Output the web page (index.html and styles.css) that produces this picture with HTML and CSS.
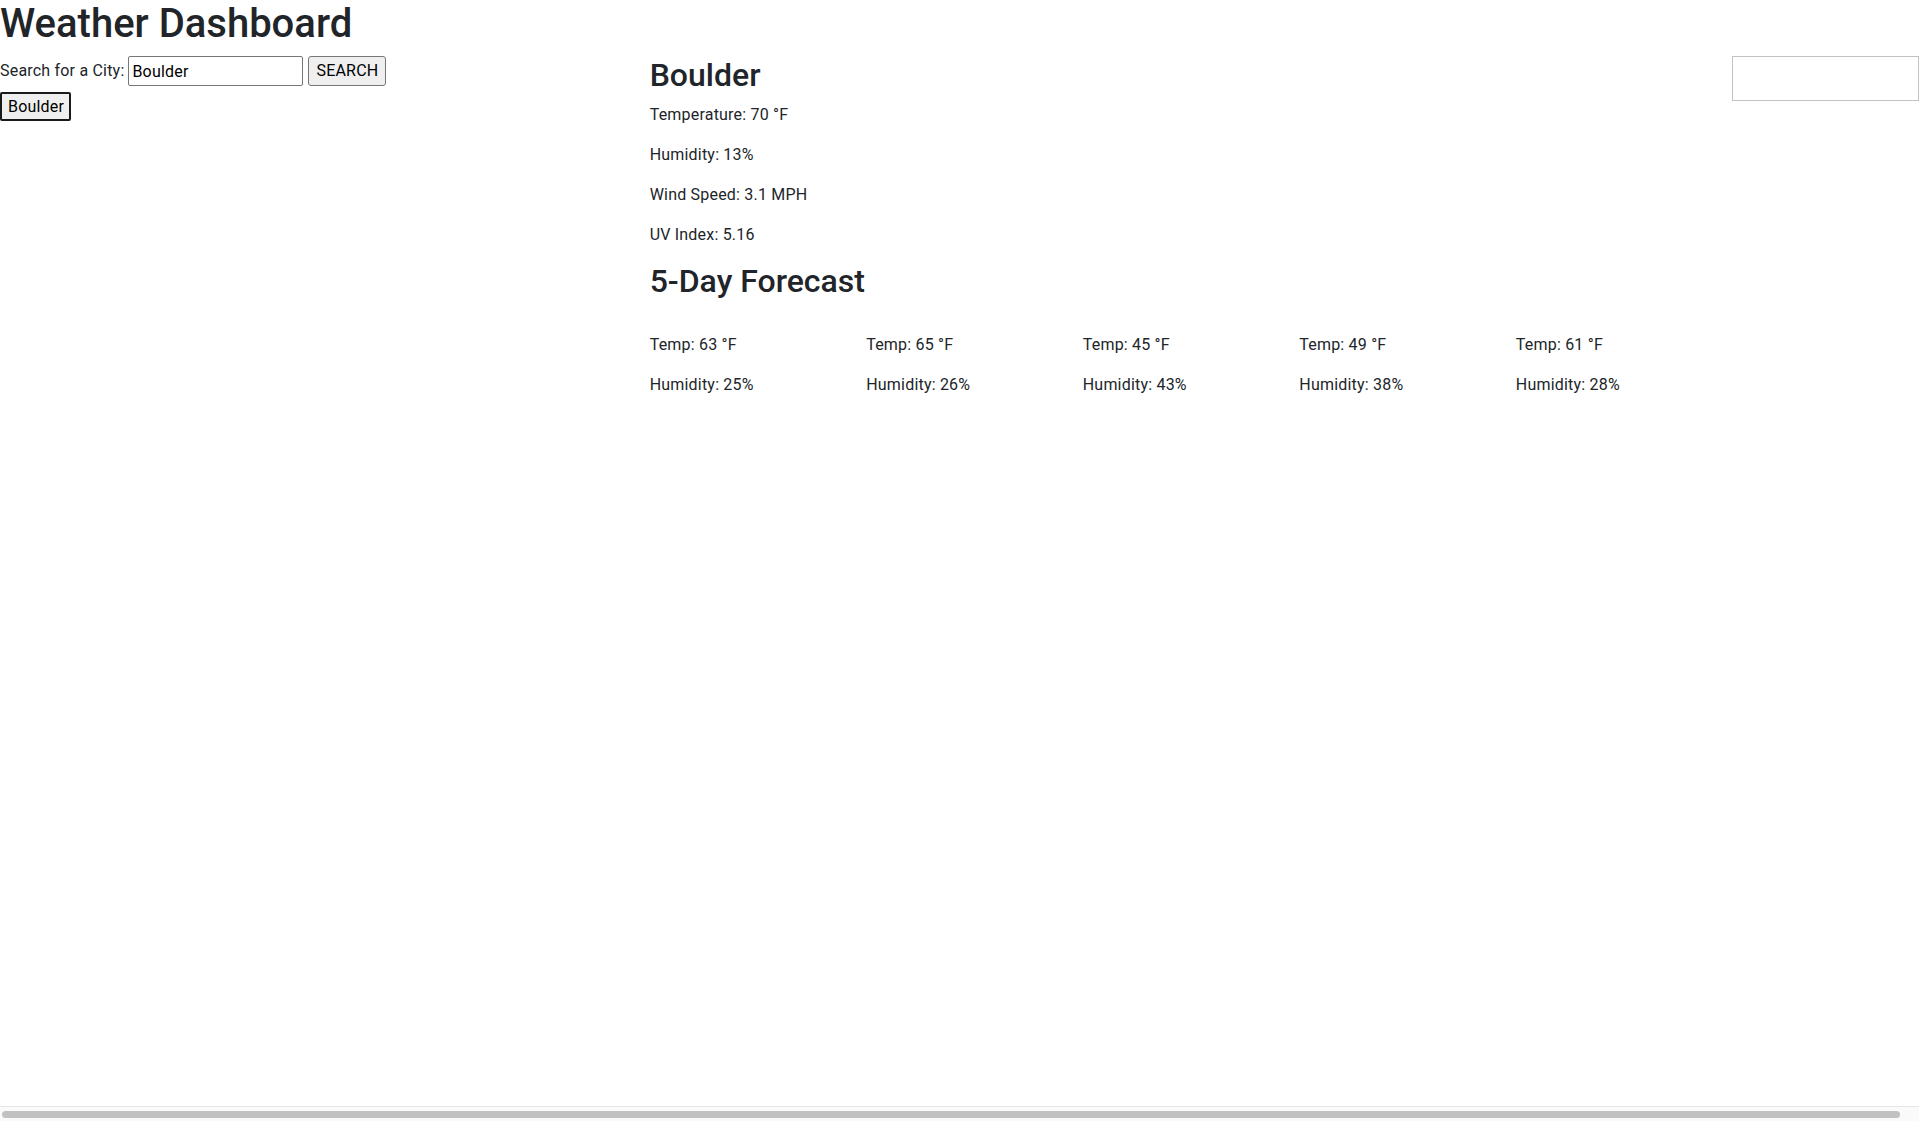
FILE: index.html
```html
<!DOCTYPE html>
<html lang="en">
<head>
<meta charset="utf-8">
<title>Weather Dashboard</title>
<link rel="stylesheet" href="styles.css">
</head>
<body>
<h1 class="title">Weather Dashboard</h1>
<div class="row">
  <div class="col col-4">
    <form class="search">
      <label class="search-label" for="city">Search for a City:</label>
      <input class="search-input" id="city" type="text" value="Boulder">
      <button class="btn search-btn" type="button">SEARCH</button>
    </form>
    <div class="history">
      <button class="btn city-btn" type="button">Boulder</button>
    </div>
  </div>
  <div class="col col-8">
    <div class="row">
      <div class="col col-10">
        <h2 class="heading">Boulder</h2>
        <p class="stat">Temperature: 70 °F</p>
        <p class="stat">Humidity: 13%</p>
        <p class="stat">Wind Speed: 3.1 MPH</p>
        <p class="stat">UV Index: 5.16</p>
      </div>
      <div class="col col-2">
        <div class="icon-box"></div>
      </div>
    </div>
    <h2 class="heading">5-Day Forecast</h2>
    <div class="row forecast">
      <div class="col col-2"><p class="stat">Temp: 63 °F</p><p class="stat">Humidity: 25%</p></div>
      <div class="col col-2"><p class="stat">Temp: 65 °F</p><p class="stat">Humidity: 26%</p></div>
      <div class="col col-2"><p class="stat">Temp: 45 °F</p><p class="stat">Humidity: 43%</p></div>
      <div class="col col-2"><p class="stat">Temp: 49 °F</p><p class="stat">Humidity: 38%</p></div>
      <div class="col col-2"><p class="stat">Temp: 61 °F</p><p class="stat">Humidity: 28%</p></div>
    </div>
  </div>
</div>
<div class="hscroll" aria-hidden="true"><div class="hscroll-thumb"></div></div>
</body>
</html>
```

FILE: styles.css
```css
*, *::before, *::after { box-sizing: border-box; }

html, body {
  margin: 0;
}

body {
  font-family: Roboto, Inter, "Liberation Sans", sans-serif;
  font-size: 16px;
  line-height: 1.5;
  letter-spacing: 0.2px;
  color: #212529;
  background: #fff;
}

.title {
  margin: 0 0 8px 0;
  font-size: 40px;
  font-weight: 500;
  line-height: 1.2;
  letter-spacing: 0;
}

.row {
  display: flex;
  flex-wrap: wrap;
  margin: 0 -15px;
}

.col {
  padding: 0 15px;
  flex: 0 0 auto;
}
.col-2 { width: 16.6667%; }
.col-4 { width: 33.3333%; }
.col-8 { width: 66.6667%; }
.col-10 { width: 83.3333%; }

.search {
  display: flex;
  align-items: center;
  height: 30px;
  margin: 0 0 6px 0;
}

.search-label {
  white-space: nowrap;
  margin-right: 4px;
}

.search-input {
  width: 175px;
  height: 30px;
  padding: 2px 3px;
  border: 1px solid #767676;
  border-radius: 2px;
  font: inherit;
  letter-spacing: inherit;
  color: #000;
  background: #fff;
}

.btn {
  font: inherit;
  letter-spacing: inherit;
  color: #000;
  background: #efefef;
  border-radius: 3px;
  padding: 0 6px;
  cursor: pointer;
}

.search-btn {
  height: 30px;
  width: 78px;
  border: 1px solid #767676;
  margin-left: 5px;
}

.city-btn {
  height: 29px;
  width: 71px;
  border: 2px solid #1a1a1a;
  border-radius: 2px;
  line-height: 24px;
}

.heading {
  margin: 0 0 8px 0;
  font-size: 32px;
  font-weight: 500;
  line-height: 1.2;
  letter-spacing: 0;
}

.stat {
  margin: 0 0 16px 0;
  padding-top: 1px;
  height: 24px;
}

.icon-box {
  height: 45px;
  border: 1px solid #c2c2c2;
}

.forecast {
  padding-top: 23px;
}

.hscroll {
  position: fixed;
  left: 0;
  right: 0;
  bottom: 0;
  height: 15px;
  background: #fafafa;
  border-top: 1px solid #e6e6e6;
  padding: 4px 19px 3px 2px;
}

.hscroll-thumb {
  height: 100%;
  background: #c1c1c1;
  border-radius: 4px;
}
```
